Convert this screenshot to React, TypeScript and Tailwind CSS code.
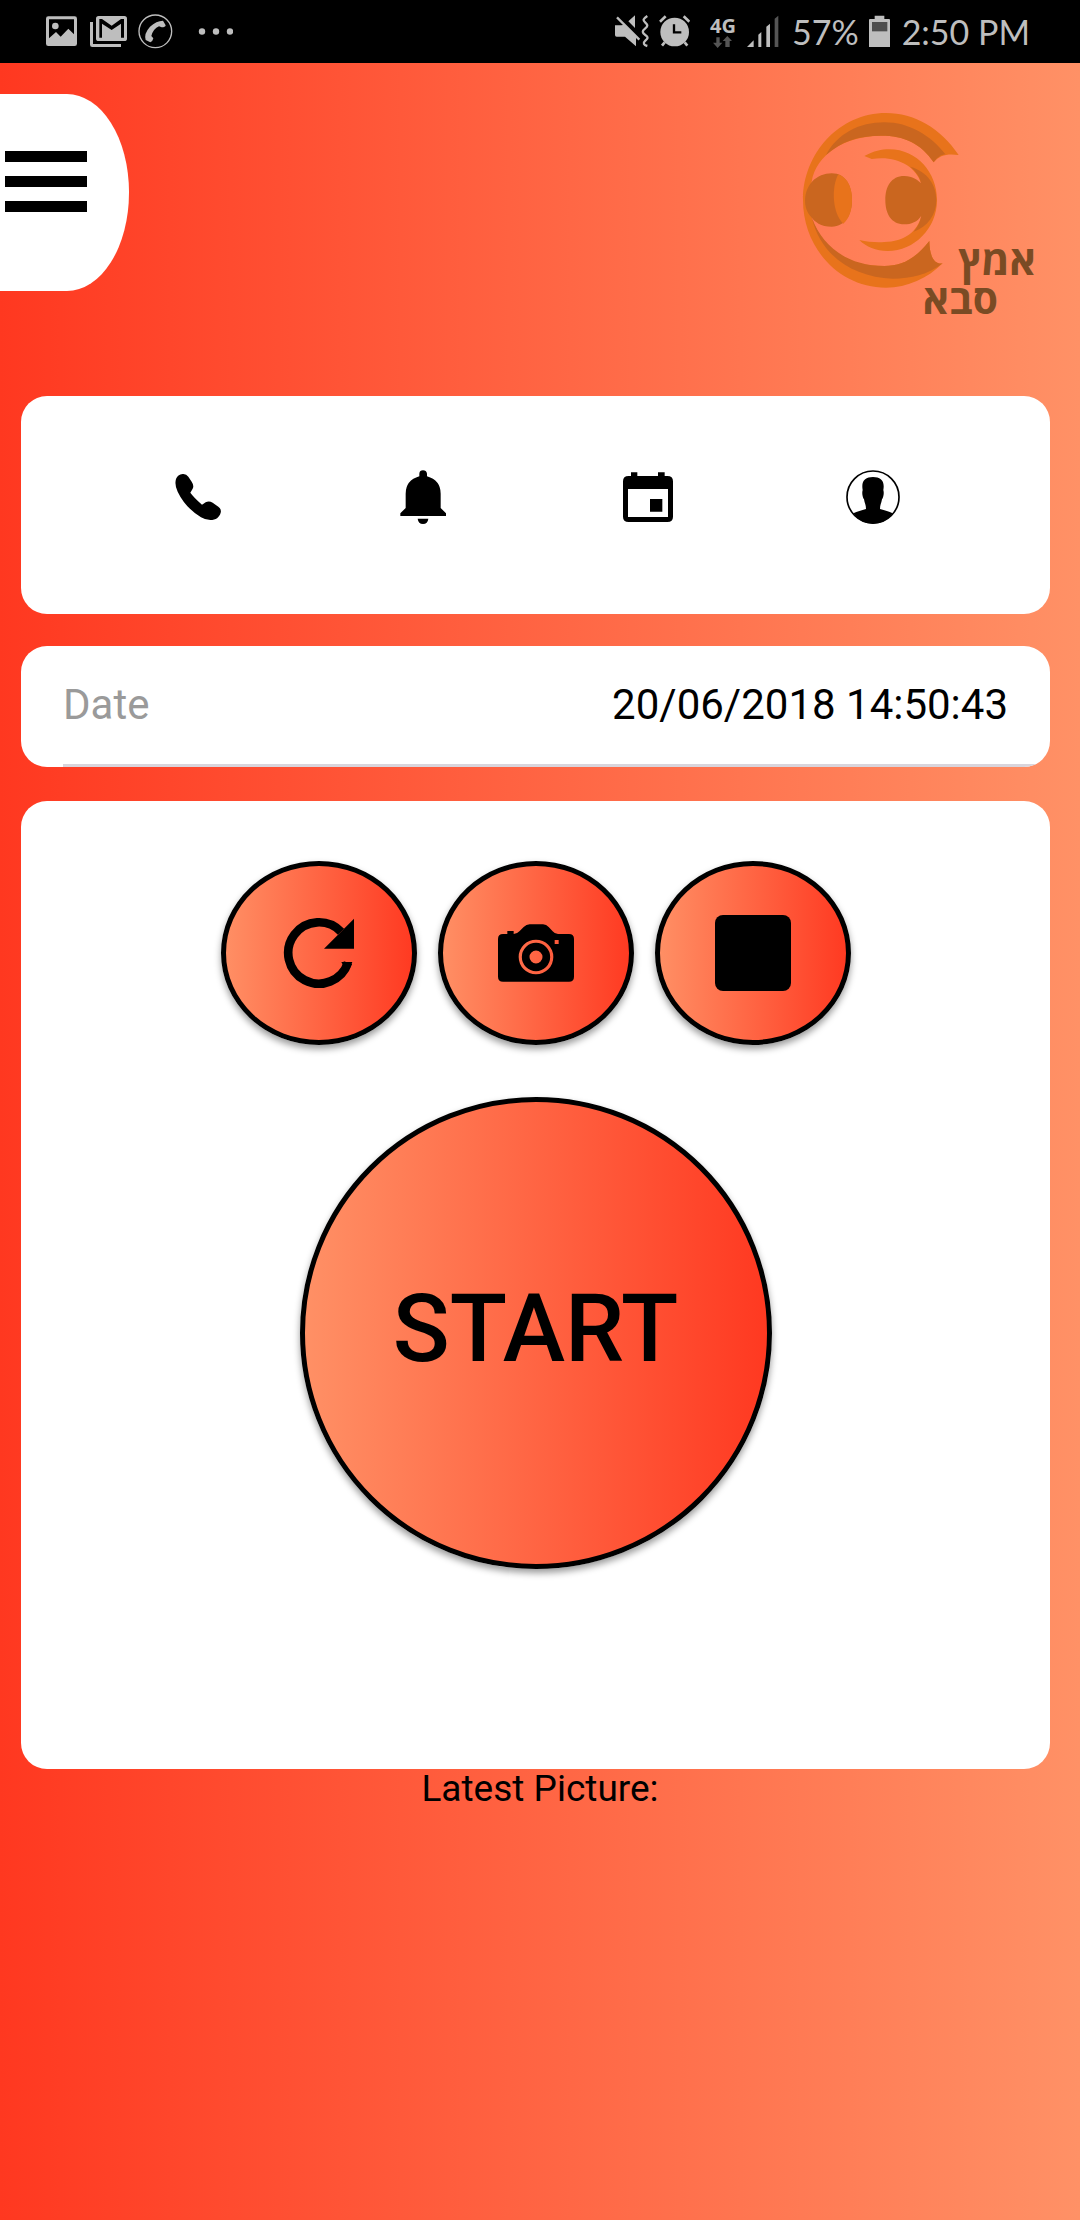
import type { ReactNode } from "react";

function StatusBar() {
  return (
    <div className="flex h-[63px] items-center justify-between bg-black pl-[46px] pr-[50px] text-[#bebebe]">
      <div className="flex items-center">
        <svg className="h-[31px] w-[31px]" viewBox="138 51 93 93" role="img" aria-label="Image saved">
          <path
            fill="currentColor"
            fillRule="evenodd"
            d="M145 52h79q7 0 7 7v75q0 7-7 7h-79q-7 0-7-7V59q0-7 7-7ZM147 61v57l21-19 14 14 23-24 17 17V61Z"
          />
          <circle cx="166" cy="81" r="10" fill="currentColor" />
        </svg>
        <svg className="ml-[13px] h-[31px] w-[37px]" viewBox="270 51 111 93" role="img" aria-label="Mail">
          <path
            fill="currentColor"
            fillRule="evenodd"
            d="M296 51h77q8 0 8 8v60q0 7-8 7h-77q-8 0-8-7V59q0-8 8-8ZM298 60v56h8V74l29 19 28-19v42h9V60h-9l-28 20-29-20Z"
          />
          <path fill="currentColor" d="M270 69h9v66h84v9h-86q-7 0-7-7Z" />
        </svg>
        <svg className="ml-[11px] h-[35px] w-[35px]" viewBox="414 45 105 105" role="img" aria-label="Call">
          <circle cx="466" cy="97" r="49" fill="none" stroke="currentColor" strokeWidth="4" />
          <path
            fill="currentColor"
            d="M489 65l8 14q-1 6-12 6l-8-3q-17 7-23 29l6 7q-2 10-9 12l-14-7q-6-19 13-40 19-18 39-18Z"
          />
        </svg>
        <svg className="ml-[25px] h-[7px] w-[35px]" viewBox="0 0 35 7" fill="currentColor" role="img" aria-label="More">
          <circle cx="4" cy="3.5" r="3.2" />
          <circle cx="18" cy="3.5" r="3.2" />
          <circle cx="32" cy="3.5" r="3.2" />
        </svg>
      </div>
      <div className="flex items-center">
        <svg className="h-[33px] w-[34px]" viewBox="48 50 102 99" role="img" aria-label="Vibrate">
          <path fill="currentColor" d="M48 81h18l12-2 33 37v28L78 115H53q-5 0-5-5ZM88 69l20-18v38Z" />
          <path d="M54 57l67 67" stroke="currentColor" strokeWidth="7" />
          <path
            d="M145 53c-14 9-14 13-6 20s8 11-1 18-9 12 1 19 8 10 0 17-5 13 6 16"
            fill="none"
            stroke="currentColor"
            strokeWidth="7"
          />
        </svg>
        <svg className="ml-[10px] h-[33px] w-[31px]" viewBox="181 50 93 99" role="img" aria-label="Alarm">
          <circle cx="228" cy="101" r="43" fill="currentColor" />
          <path
            d="M184 70l17-16M272 70l-17-16M198 132l-8 10M258 132l8 10"
            stroke="currentColor"
            strokeWidth="8"
          />
          <path d="M226 78v24h22" fill="none" stroke="#000" strokeWidth="7" />
        </svg>
        <div className="ml-[20px] flex w-[26px] flex-col items-center">
          <span className="font-['Open_Sans',sans-serif] text-[20px] font-bold leading-5">4G</span>
          <svg className="h-[12px] w-[19px]" viewBox="0 0 57 36" fill="#555" aria-hidden="true">
            <path d="M10 4h10v16h8L14 36 0 20h10ZM37 33h13V15h7L43 0 29 15h8Z" />
          </svg>
        </div>
        <svg className="ml-[11px] h-[33px] w-[32px]" viewBox="446 48 96 99" fill="currentColor" role="img" aria-label="Signal">
          <path d="M446 144l20-20v20ZM480 107l9-8v45h-9ZM504 83l11-9v70h-11Z" />
          <path d="M529 59l11-9v94h-11Z" fill="#555" />
        </svg>
        <span className="ml-[13px] font-['Lato',sans-serif] text-[34px] leading-10">57%</span>
        <svg className="ml-[10px] h-[33px] w-[21px]" viewBox="807 48 63 99" role="img" aria-label="Battery">
          <path fill="currentColor" d="M824 50h29v10h14q3 0 3 3v81h-63V63q0-3 3-3h14Z" />
          <path fill="#4d4d4d" d="M816 69h46v28h-46Z" />
        </svg>
        <span className="ml-[12px] font-['Lato',sans-serif] text-[34px] leading-10">2:50 PM</span>
      </div>
    </div>
  );
}

function Logo() {
  return (
    <svg className="mt-[17px] mr-[39px] h-[240px] w-[240px]" viewBox="60 63 720 720" role="img" aria-label="אמץ סבא">
      <path
        fill="#e8731b"
        d="M533 195C480 115 400 69 315 69C175 69 66 190 66 330C66 475 175 593 315 593C380 593 440 565 485 520C466 524 446 510 445 453C400 510 360 528 310 528C205 528 130 490 93 385L92 275C105 195 190 137 300 137C370 137 420 160 458 217C475 195 500 190 533 195Z"
      />
      <path
        fill="#ca661f"
        d="M135 195C170 130 235 97 310 97C385 97 450 137 493 193C480 194 470 201 458 217C420 160 370 137 300 137C230 137 180 155 135 195Z"
      />
      <path
        fill="#ca661f"
        d="M93 385C125 470 200 528 310 528C360 528 400 510 445 453C446 510 466 524 485 520C440 555 390 566 335 566C220 562 120 500 93 385Z"
      />
      <path
        fill="#e8731b"
        d="M250 198C280 183 300 178 325 178C410 178 468 250 468 330C468 415 400 483 320 483C285 483 255 470 235 450C260 456 290 458 310 456C370 454 410 425 421 377L421 282C405 225 340 195 272 207Z"
      />
      <path
        fill="#ca661f"
        d="M370 258C395 258 410 270 420 280C418 262 405 245 388 230C440 245 466 285 466 330C466 375 440 410 398 425C410 410 418 395 421 377C410 395 390 403 370 403C330 403 313 370 313 330C313 290 330 258 370 258Z"
      />
      <path
        fill="#ca661f"
        d="M93 275C110 258 130 250 152 250C195 250 213 290 213 330C213 370 195 410 152 410C120 410 100 395 90 380C66 355 66 305 93 275Z"
      />
      <path fill="#e8731b" d="M172 253C203 265 213 297 213 330C213 360 205 385 187 401C153 370 151 290 172 253Z" />
      <g
        className="font-['Open_Sans','DejaVu_Sans',sans-serif] font-bold"
        fill="#7a4b24"
        fontSize="122"
        textAnchor="middle"
      >
        <text x="648" y="555">אמץ</text>
        <text x="538" y="671">סבא</text>
      </g>
    </svg>
  );
}

function IconButton({ label, children }: { label: string; children: ReactNode }) {
  return (
    <button type="button" aria-label={label} className="flex h-[106px] items-center justify-center">
      {children}
    </button>
  );
}

function RoundButton({ label, children }: { label: string; children: ReactNode }) {
  return (
    <button
      type="button"
      aria-label={label}
      className="flex h-[184px] w-[196px] items-center justify-center rounded-[50%] border-5 border-black bg-linear-to-r/srgb from-[#ff9166] to-[#ff3820] bg-origin-border shadow-[0_4px_7px_rgba(0,0,0,0.4)]"
    >
      {children}
    </button>
  );
}

export default function App() {
  return (
    <div className="flex min-h-screen flex-col bg-linear-to-r/srgb from-[#ff3820] to-[#ff9166] font-['Roboto',sans-serif] text-black">
      <StatusBar />
      <header className="flex items-start justify-between pt-[31px] pb-[45px]">
        <button
          type="button"
          aria-label="Menu"
          className="flex h-[197px] w-[129px] items-center rounded-r-[62px_98px] bg-white pb-[22px] pl-[5px]"
        >
          <svg className="h-[61px] w-[82px]" viewBox="0 0 82 61" aria-hidden="true">
            <path d="M0 0h82v11H0ZM0 25h82v11H0ZM0 50h82v11H0Z" />
          </svg>
        </button>
        <Logo />
      </header>

      <main className="flex flex-col pr-[30px] pl-[21px]">
        <nav className="grid grid-cols-4 rounded-[26px] bg-white px-16 pt-12 pb-16">
          <IconButton label="Call">
            <svg className="h-[54px] w-[54px]" viewBox="92 90 162 162" aria-hidden="true">
              <path d="M107 117Q112 104 127 102Q138 101 144 110L154 125Q162 137 157 146L150 158Q160 172 185 194L196 187Q206 182 217 188L234 200Q244 208 241 218C237 232 227 240 210 240Q195 240 182 232Q135 203 112 155Q102 134 107 117Z" />
            </svg>
          </IconButton>
          <IconButton label="Notifications">
            <svg className="h-[54px] w-[54px]" viewBox="767 90 162 162" aria-hidden="true">
              <path d="M837 109V101Q838 91 848 91Q858 91 860 101V109Q901 121 901 161V204L917 220V228H780V220L796 204V161Q796 121 837 109ZM832 236H864Q862 252 848 252Q834 252 832 236Z" />
            </svg>
          </IconButton>
          <IconButton label="Calendar">
            <svg className="h-[54px] w-[54px]" viewBox="123 90 162 162" aria-hidden="true">
              <path
                fillRule="evenodd"
                d="M153 97H172V108H234V97H254V108H262Q279 108 279 124V230Q279 246 262 246H146Q129 246 129 230V124Q129 108 146 108H153ZM144 147V231H264V147ZM210 177H247V215H210Z"
              />
            </svg>
          </IconButton>
          <IconButton label="Profile">
            <svg className="h-[54px] w-[54px]" viewBox="798 90 162 162" aria-hidden="true">
              <circle cx="879" cy="171" r="78" fill="none" stroke="#000" strokeWidth="5" />
              <path d="M848 150C843 122 856 111 879 111C902 111 915 122 910 150C913 160 910 172 906 178C904 190 900 195 900 207C915 212 927 213 938 220Q916 252 879 252Q842 252 820 220C832 213 844 212 858 207C858 195 854 190 852 178C848 172 845 160 848 150Z" />
            </svg>
          </IconButton>
        </nav>

        <section className="mt-8 overflow-hidden rounded-[26px] bg-white">
          <div className="ml-[42px] flex items-center justify-between border-b-3 border-[#d9d5dc] py-[35px] pr-[42px] text-[42px] leading-12">
            <span className="text-[#9a9a9a]">Date</span>
            <time dateTime="2018-06-20T14:50:43">20/06/2018 14:50:43</time>
          </div>
        </section>

        <section className="mt-[34px] flex flex-col items-center rounded-[26px] bg-white pt-[60px] pb-[200px]">
          <div className="flex gap-[21px]">
            <RoundButton label="Refresh">
              <svg className="h-[76px] w-[76px]" viewBox="244 222 228 228" aria-hidden="true">
                <path d="M445 365A92 92 0 1 1 424 272" fill="none" stroke="#000" strokeWidth="26" />
                <path d="M463 233V323H373Z" />
                <path d="M425 363H458L450 384L432 376Z" />
              </svg>
            </RoundButton>
            <RoundButton label="Take picture">
              <svg className="h-[76px] w-[76px]" viewBox="892 222 228 228" aria-hidden="true">
                <path
                  fillRule="evenodd"
                  d="M907 279H920V270H939V279Q950 278 957 270L969 258Q977 250 987 250H1027Q1037 250 1044 258L1056 271Q1062 279 1072 279H1105Q1120 279 1120 294V407Q1120 422 1105 422H907Q892 422 892 407V294Q892 279 907 279ZM1062 297V309H1074V297ZM1006 296A52 52 0 1 0 1006 400A52 52 0 1 0 1006 296Z"
                />
                <circle cx="1006" cy="348" r="31" fill="none" stroke="#000" strokeWidth="23" />
              </svg>
            </RoundButton>
            <RoundButton label="Stop">
              <span className="h-[76px] w-[76px] rounded-lg bg-black" />
            </RoundButton>
          </div>
          <button
            type="button"
            className="mt-[52px] h-[472px] w-[472px] rounded-full border-5 border-black bg-linear-to-r/srgb from-[#ff9166] to-[#ff3820] bg-origin-border pb-2 text-[94px] font-medium shadow-[0_4px_7px_rgba(0,0,0,0.4)]"
          >
            START
          </button>
        </section>
      </main>
      <p className="text-center text-[37px] leading-10">Latest Picture:</p>
    </div>
  );
}
